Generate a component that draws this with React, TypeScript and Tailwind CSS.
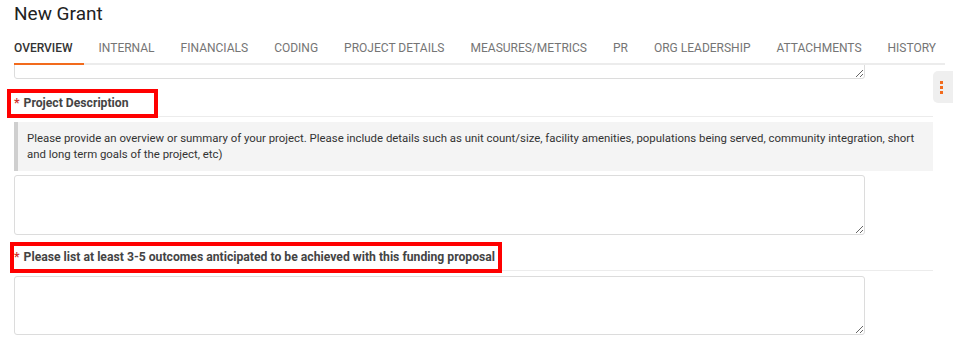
import { useState } from 'react';

const tabs = [
    'Overview',
    'Internal',
    'Financials',
    'Coding',
    'Project Details',
    'Measures/Metrics',
    'PR',
    'Org Leadership',
    'Attachments',
    'History',
];

function FieldLabel({ text, boxClass }: { text: string; boxClass: string }) {
    return (
        <div className="relative flex items-center h-[26px] border-b border-[#ececec] text-[12.2px] font-bold text-[#444]">
            <span className="text-[#d0342c] mr-[4px]">*</span>
            <span>{text}</span>
            {/* review highlight */}
            <span className={`absolute border-4 border-[#ff0000] pointer-events-none ${boxClass}`} />
        </div>
    );
}

export default function App() {
    const [active, setActive] = useState('Overview');

    return (
        <div
            className="relative w-[953px] h-[343px] overflow-hidden bg-white"
            style={{ fontFamily: 'Roboto, "Noto Sans", sans-serif' }}
        >
            <h1 className="pl-[14px] pt-[3px] h-[32px] text-[19px] leading-[22px] text-[#222]">New Grant</h1>

            {/* Tabs */}
            <div className="ml-[14px] mr-[8px] flex gap-[26px] border-b-2 border-[#ececec] h-[33px] pt-[1px]">
                {tabs.map((t) => {
                    const isActive = t === active;
                    return (
                        <button
                            key={t}
                            onClick={() => setActive(t)}
                            className={`relative uppercase text-[12px] leading-[30px] whitespace-nowrap ${
                                isActive ? 'text-[#333] font-medium' : 'text-[#757575]'
                            }`}
                        >
                            {t}
                            {isActive && (
                                <span className="absolute left-0 -right-[11px] -bottom-[2px] h-[2px] bg-[#f26b1d]" />
                            )}
                        </button>
                    );
                })}
            </div>

            <div className="pl-[14px] pr-[20px]">
                {/* previous field, scrolled under the tabs */}
                <div className="w-[851px] h-[14px] overflow-hidden">
                    <textarea className="block w-[851px] h-[60px] -mt-[46px] border border-[#dcdcdc] rounded-[3px]" />
                </div>

                <div className="mt-[12px]">
                    <FieldLabel text="Project Description" boxClass="-left-[7px] -top-[2px] w-[151px] h-[29px]" />
                </div>

                <div className="mt-[5px] bg-[#f4f4f4] border-l-4 border-[#cfcfcf] pl-[9px] pr-[10px] pt-[8px] pb-[9px] text-[11.4px] leading-[16px] text-[#333]">
                    Please provide an overview or summary of your project. Please include details such as unit count/size,
                    facility amenities, populations being served, community integration, short and long term goals of the
                    project, etc)
                </div>

                <textarea className="block mt-[4px] w-[851px] h-[60px] border border-[#dcdcdc] rounded-[3px]" />

                <div className="mt-[10px]">
                    <FieldLabel
                        text="Please list at least 3-5 outcomes anticipated to be achieved with this funding proposal"
                        boxClass="-left-[4px] -top-[3px] w-[492px] h-[31px]"
                    />
                </div>

                <textarea className="block mt-[5px] w-[851px] h-[59px] border border-[#dcdcdc] rounded-[3px]" />
            </div>

            {/* side handle */}
            <div className="absolute right-0 top-[71px] w-[20px] h-[32px] bg-[#efefef] rounded-l-[5px] flex flex-col items-center justify-center gap-[2px] pr-[4px]">
                <span className="w-[3px] h-[3px] bg-[#f26b1d]" />
                <span className="w-[3px] h-[3px] bg-[#f26b1d]" />
                <span className="w-[3px] h-[3px] bg-[#f26b1d]" />
            </div>
        </div>
    );
}
